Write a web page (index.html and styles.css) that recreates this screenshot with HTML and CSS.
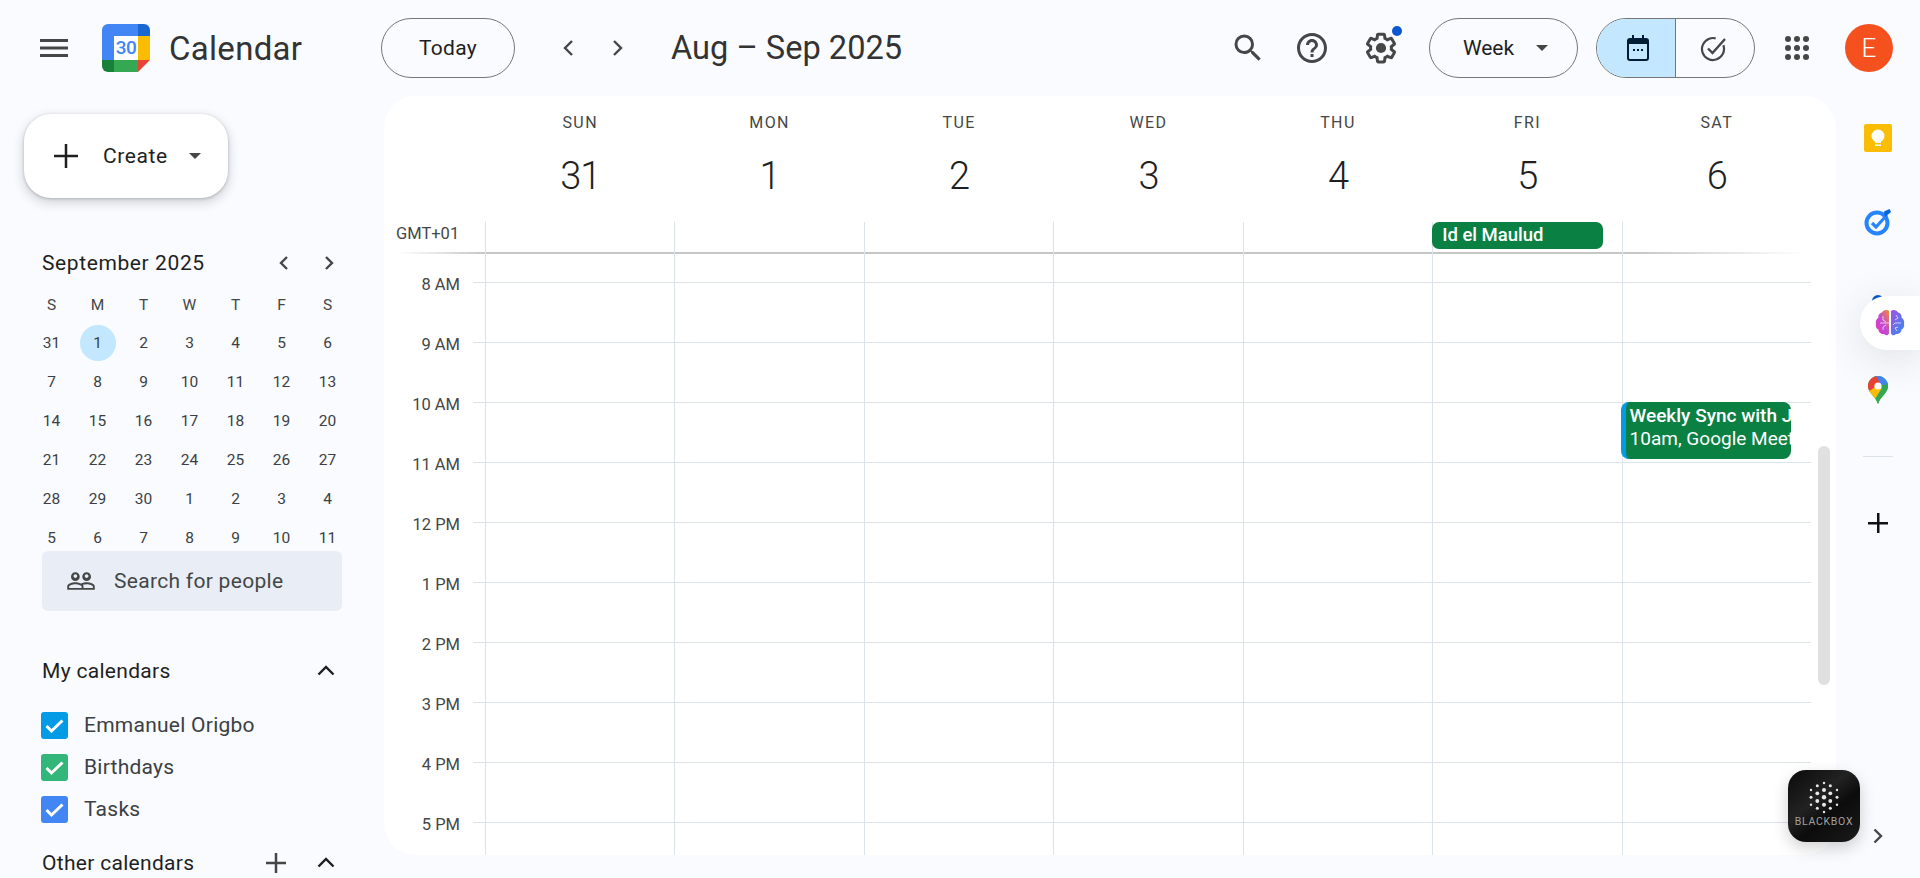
FILE: index.html
```html
<!DOCTYPE html>
<html lang="en">
<head>
    <meta charset="UTF-8">
    <meta name="viewport" content="width=device-width, initial-scale=1.0">
    <title>Calendar - Week of August 31, 2025</title>
    <link rel="stylesheet" href="styles.css">
</head>
<body>
    <header class="topbar">
        <div class="brand">
            <span class="icon-btn">
                <svg width="28" height="18" viewBox="0 0 28 18"><path d="M0 0h28v3H0zM0 7.5h28v3H0zM0 15h28v3H0z" fill="#444746"/></svg>
            </span>
            <span class="logo">
                <svg width="48" height="48" viewBox="0 0 48 48">
                    <path d="M6 0h30v12h-24v24H0V6a6 6 0 0 1 6-6z" fill="#4285f4"/>
                    <path d="M36 0h6a6 6 0 0 1 6 6v6H36z" fill="#1967d2"/>
                    <path d="M36 12h12v24H36z" fill="#fbbc04"/>
                    <path d="M12 36h24v12H12z" fill="#34a853"/>
                    <path d="M0 36h12v12H6a6 6 0 0 1-6-6z" fill="#188038"/>
                    <path d="M36 36h12L36 48z" fill="#ea4335"/>
                    <path d="M12 12h24v24H12z" fill="#fff"/>
                </svg>
                <span class="logo-num">30</span>
            </span>
            <span class="brand-name">Calendar</span>
        </div>
        <button class="pill today">Today</button>
        <span class="icon-btn nav-prev"><svg width="24" height="24" viewBox="0 0 24 24"><path d="M16 5l-7 7 7 7" class="chev"/></svg></span>
        <span class="icon-btn nav-next"><svg width="24" height="24" viewBox="0 0 24 24"><path d="M9 5l7 7-7 7" class="chev"/></svg></span>
        <h1 class="range">Aug – Sep 2025</h1>
        <div class="spacer"></div>
        <span class="icon-btn">
            <svg width="36" height="36" viewBox="0 0 24 24"><path fill="#444746" d="M15.5 14h-.79l-.28-.27A6.471 6.471 0 0 0 16 9.5 6.5 6.5 0 1 0 9.500 16c1.610 0 3.090-.59 4.230-1.570l.27.28v.79l5 4.990L20.490 19l-4.990-5zm-6 0C7.010 14 5 11.990 5 9.500S7.010 5 9.500 5 14 7.010 14 9.500 11.990 14 9.500 14z"/></svg>
        </span>
        <span class="icon-btn gap-help">
            <svg width="36" height="36" viewBox="0 0 24 24"><path fill="#444746" d="M11 18h2v-2h-2v2zm1-16C6.48 2 2 6.48 2 12s4.48 10 10 10 10-4.48 10-10S17.52 2 12 2zm0 18c-4.41 0-8-3.59-8-8s3.59-8 8-8 8 3.59 8 8-3.59 8-8 8zm0-14c-2.21 0-4 1.79-4 4h2c0-1.1.9-2 2-2s2 .9 2 2c0 2-3 1.75-3 5h2c0-2.25 3-2.5 3-5 0-2.21-1.79-4-4-4z"/></svg>
        </span>
        <span class="icon-btn gap-settings settings">
            <svg width="36" height="36" viewBox="0 0 24 24"><path fill="#444746" d="M13.85 22.25h-3.7c-.74 0-1.36-.54-1.45-1.27l-.27-1.89c-.27-.14-.53-.29-.79-.46l-1.8.72c-.7.26-1.47-.03-1.81-.65L2.2 15.53c-.35-.66-.2-1.44.36-1.88l1.53-1.19c-.01-.15-.02-.3-.02-.46 0-.15.01-.31.02-.46l-1.52-1.19c-.59-.45-.74-1.26-.37-1.88l1.85-3.19c.34-.62 1.11-.9 1.79-.63l1.81.73c.26-.17.52-.32.78-.46l.27-1.91c.09-.7.71-1.25 1.44-1.25h3.7c.74 0 1.36.54 1.45 1.27l.27 1.89c.27.14.53.29.79.46l1.8-.72c.71-.26 1.48.03 1.82.65l1.84 3.18c.36.66.2 1.44-.36 1.88l-1.52 1.19c.01.15.02.3.02.46s-.01.31-.02.46l1.52 1.19c.56.45.72 1.23.37 1.86l-1.86 3.22c-.34.62-1.11.9-1.8.63l-1.8-.72c-.26.17-.52.32-.78.46l-.27 1.91c-.1.68-.72 1.22-1.46 1.22zm-3.23-2h2.76l.37-2.55.53-.22c.44-.18.88-.44 1.34-.78l.45-.34 2.38.96 1.38-2.4-2.03-1.58.07-.56c.03-.26.06-.51.06-.78s-.03-.53-.06-.78l-.07-.56 2.03-1.58-1.39-2.4-2.39.96-.45-.35c-.42-.32-.87-.58-1.33-.77l-.52-.22-.37-2.55h-2.76l-.37 2.55-.53.21c-.44.19-.88.44-1.34.79l-.45.33-2.38-.95-1.39 2.39 2.03 1.58-.07.56a7 7 0 0 0-.06.79c0 .26.02.53.06.78l.07.56-2.03 1.58 1.38 2.4 2.39-.96.45.35c.43.33.86.58 1.33.77l.53.22.38 2.55z"/><circle cx="12" cy="12" r="3.4" fill="#444746"/></svg>
            <span class="notify-dot"></span>
        </span>
        <button class="pill week">Week <span class="caret"></span></button>
        <div class="toggle">
            <span class="toggle-item active">
                <svg width="24" height="26" viewBox="0 0 24 26"><path fill="#001d35" d="M6 0h2v3h8V0h2v3h2a3 3 0 0 1 3 3v17a3 3 0 0 1-3 3H4a3 3 0 0 1-3-3V6a3 3 0 0 1 3-3h2zM3 9v14a1 1 0 0 0 1 1h16a1 1 0 0 0 1-1V9zm4 5h2v2H7zm4 0h2v2h-2zm4 0h2v2h-2z"/></svg>
            </span>
            <span class="toggle-item tasks-view">
                <svg width="28" height="28" viewBox="0 0 28 28"><circle cx="13" cy="15" r="11" fill="none" stroke="#444746" stroke-width="2.2" stroke-dasharray="58 11" transform="rotate(-20 13 15)"/><path d="M8 14.5l4.5 4.500L25 5" fill="none" stroke="#444746" stroke-width="2.4"/></svg>
            </span>
        </div>
        <span class="icon-btn gap-apps">
            <svg width="24" height="24" viewBox="0 0 24 24" fill="#444746"><circle cx="3" cy="3" r="3"/><circle cx="12" cy="3" r="3"/><circle cx="21" cy="3" r="3"/><circle cx="3" cy="12" r="3"/><circle cx="12" cy="12" r="3"/><circle cx="21" cy="12" r="3"/><circle cx="3" cy="21" r="3"/><circle cx="12" cy="21" r="3"/><circle cx="21" cy="21" r="3"/></svg>
        </span>
        <span class="avatar">E</span>
    </header>

    <div class="main">
        <aside class="sidebar">
            <button class="create">
                <svg width="24" height="24" viewBox="0 0 24 24"><path d="M10.75 0h2.5v10.75H24v2.5H13.25V24h-2.5V13.25H0v-2.5h10.75z" fill="#1f1f1f"/></svg>
                <span class="create-label">Create</span>
                <span class="caret"></span>
            </button>

            <div class="mini-head">
                <span class="mini-title">September 2025</span>
                <svg width="24" height="24" viewBox="0 0 24 24"><path d="M15 6l-6 6 6 6" class="chev"/></svg>
                <svg width="24" height="24" viewBox="0 0 24 24"><path d="M9 6l6 6-6 6" class="chev"/></svg>
            </div>
            <div class="mini-grid">
                <span class="dow">S</span><span class="dow">M</span><span class="dow">T</span><span class="dow">W</span><span class="dow">T</span><span class="dow">F</span><span class="dow">S</span>
                <span>31</span><span><b class="selected">1</b></span><span>2</span><span>3</span><span>4</span><span>5</span><span>6</span>
                <span>7</span><span>8</span><span>9</span><span>10</span><span>11</span><span>12</span><span>13</span>
                <span>14</span><span>15</span><span>16</span><span>17</span><span>18</span><span>19</span><span>20</span>
                <span>21</span><span>22</span><span>23</span><span>24</span><span>25</span><span>26</span><span>27</span>
                <span>28</span><span>29</span><span>30</span><span>1</span><span>2</span><span>3</span><span>4</span>
                <span>5</span><span>6</span><span>7</span><span>8</span><span>9</span><span>10</span><span>11</span>
            </div>

            <div class="people-search">
                <svg width="30" height="30" viewBox="0 0 24 24"><path fill="#444746" d="M16.5 13c-1.2 0-3.07.34-4.5 1-1.43-.67-3.3-1-4.5-1C5.33 13 1 14.08 1 16.25V19h22v-2.75c0-2.17-4.33-3.25-6.5-3.25zm-4 4.5h-10v-1.25c0-.54 2.56-1.75 5-1.75s5 1.21 5 1.75v1.25zm9 0H14v-1.25c0-.46-.2-.86-.52-1.22.88-.3 1.96-.53 3.02-.53 2.44 0 5 1.21 5 1.75v1.25zM7.5 12c1.93 0 3.5-1.57 3.5-3.5S9.43 5 7.5 5 4 6.57 4 8.5 5.57 12 7.5 12zm0-5.5c.83 0 1.5.67 1.5 1.5s-.67 1.5-1.5 1.5S6 8.83 6 8s.67-1.5 1.5-1.5zm9 5.5c1.93 0 3.5-1.57 3.5-3.5S18.43 5 16.5 5 13 6.57 13 8.5s1.57 3.5 3.5 3.5zm0-5.5c.83 0 1.5.67 1.5 1.5s-.67 1.5-1.5 1.5S15 8.83 15 8s.67-1.5 1.5-1.5z"/></svg>
                <span>Search for people</span>
            </div>

            <div class="section-head my-head">
                <span class="section-title">My calendars</span>
                <svg width="24" height="24" viewBox="0 0 24 24"><path d="M4.5 15.5l7.5-7.5 7.5 7.5" class="chev dark"/></svg>
            </div>
            <ul class="cal-list">
                <li><span class="check blue"><svg width="21" height="21" viewBox="0 0 21 21"><path d="M2.500 11l5 5L18.500 5.500" class="tick"/></svg></span>Emmanuel Origbo</li>
                <li><span class="check green"><svg width="21" height="21" viewBox="0 0 21 21"><path d="M2.500 11l5 5L18.500 5.500" class="tick"/></svg></span>Birthdays</li>
                <li><span class="check indigo"><svg width="21" height="21" viewBox="0 0 21 21"><path d="M2.500 11l5 5L18.500 5.500" class="tick"/></svg></span>Tasks</li>
            </ul>
            <div class="section-head other-head">
                <span class="section-title">Other calendars</span>
                <svg width="24" height="24" viewBox="0 0 24 24"><path d="M2 10.75h8.75V2h2.5v8.75H22v2.5h-8.75V22h-2.5v-8.75H2z" fill="#444746"/></svg>
                <svg class="other-chev" width="24" height="24" viewBox="0 0 24 24"><path d="M4.5 15.5l7.5-7.5 7.5 7.5" class="chev dark"/></svg>
            </div>
        </aside>

        <main class="card">
            <div class="week-head">
                <div class="day-head"><span class="day-name">SUN</span><span class="day-num">31</span></div>
                <div class="day-head"><span class="day-name">MON</span><span class="day-num">1</span></div>
                <div class="day-head"><span class="day-name">TUE</span><span class="day-num">2</span></div>
                <div class="day-head"><span class="day-name">WED</span><span class="day-num">3</span></div>
                <div class="day-head"><span class="day-name">THU</span><span class="day-num">4</span></div>
                <div class="day-head"><span class="day-name">FRI</span><span class="day-num">5</span></div>
                <div class="day-head"><span class="day-name">SAT</span><span class="day-num">6</span></div>
            </div>
            <div class="allday week-row">
                <div class="tz">GMT+01</div>
                <div class="cell"></div><div class="cell"></div><div class="cell"></div><div class="cell"></div><div class="cell"></div>
                <div class="cell"><div class="allday-event">Id el Maulud</div></div>
                <div class="cell"></div>
            </div>
            <div class="hours">
                <div class="week-row first"><div class="time"></div><div class="cell"></div><div class="cell"></div><div class="cell"></div><div class="cell"></div><div class="cell"></div><div class="cell"></div><div class="cell"></div></div>
                <div class="week-row hour"><div class="time">8 AM</div><div class="cell"></div><div class="cell"></div><div class="cell"></div><div class="cell"></div><div class="cell"></div><div class="cell"></div><div class="cell"></div></div>
                <div class="week-row hour"><div class="time">9 AM</div><div class="cell"></div><div class="cell"></div><div class="cell"></div><div class="cell"></div><div class="cell"></div><div class="cell"></div><div class="cell"></div></div>
                <div class="week-row hour"><div class="time">10 AM</div><div class="cell"></div><div class="cell"></div><div class="cell"></div><div class="cell"></div><div class="cell"></div><div class="cell"></div>
                    <div class="cell">
                        <div class="event">
                            <div class="event-title">Weekly Sync with J</div>
                            <div class="event-meta">10am, Google Meet</div>
                        </div>
                    </div>
                </div>
                <div class="week-row hour"><div class="time">11 AM</div><div class="cell"></div><div class="cell"></div><div class="cell"></div><div class="cell"></div><div class="cell"></div><div class="cell"></div><div class="cell"></div></div>
                <div class="week-row hour"><div class="time">12 PM</div><div class="cell"></div><div class="cell"></div><div class="cell"></div><div class="cell"></div><div class="cell"></div><div class="cell"></div><div class="cell"></div></div>
                <div class="week-row hour"><div class="time">1 PM</div><div class="cell"></div><div class="cell"></div><div class="cell"></div><div class="cell"></div><div class="cell"></div><div class="cell"></div><div class="cell"></div></div>
                <div class="week-row hour"><div class="time">2 PM</div><div class="cell"></div><div class="cell"></div><div class="cell"></div><div class="cell"></div><div class="cell"></div><div class="cell"></div><div class="cell"></div></div>
                <div class="week-row hour"><div class="time">3 PM</div><div class="cell"></div><div class="cell"></div><div class="cell"></div><div class="cell"></div><div class="cell"></div><div class="cell"></div><div class="cell"></div></div>
                <div class="week-row hour"><div class="time">4 PM</div><div class="cell"></div><div class="cell"></div><div class="cell"></div><div class="cell"></div><div class="cell"></div><div class="cell"></div><div class="cell"></div></div>
                <div class="week-row hour"><div class="time">5 PM</div><div class="cell"></div><div class="cell"></div><div class="cell"></div><div class="cell"></div><div class="cell"></div><div class="cell"></div><div class="cell"></div></div>
            </div>
            <div class="scroll-thumb"></div>
        </main>

        <nav class="addons">
            <span class="addon">
                <svg width="28" height="28" viewBox="0 0 28 28"><rect width="28" height="28" rx="2" fill="#fbbc04"/><circle cx="14" cy="12" r="6.5" fill="#fff"/><path d="M11 16h6v3h-6z" fill="#fff"/><path d="M11 20.5h6v1.5h-6z" fill="#fff"/></svg>
            </span>
            <span class="addon">
                <svg width="28" height="28" viewBox="0 0 28 28"><circle cx="13" cy="15" r="10.5" fill="none" stroke="#2684fc" stroke-width="4"/><path d="M8 15l4 4L23 7" fill="none" stroke="#2684fc" stroke-width="3.2"/><path d="M20 3.500l5.500-2.500 1.500 3-6 5z" fill="#0066da"/></svg>
            </span>
            <span class="addon">
                <svg width="28" height="28" viewBox="0 0 28 28"><circle cx="14" cy="9" r="6" fill="#0b57d0"/><path d="M2 26c0-6 6-9 12-9s12 3 12 9z" fill="#1a73e8"/></svg>
            </span>
            <span class="addon">
                <svg width="20" height="28" viewBox="0 0 20 28">
                    <defs><clipPath id="pin"><path d="M10 0C4.5 0 0 4.5 0 10c0 7 7.5 10 10 18 2.500-8 10-11 10-18C20 4.500 15.500 0 10 0z"/></clipPath></defs>
                    <g clip-path="url(#pin)">
                        <path d="M0 0h20v28H0z" fill="#34a853"/>
                        <path d="M4 0h16v9h-7z" fill="#4285f4"/>
                        <path d="M0 0h8l4 7-9 8H0z" fill="#ea4335"/>
                        <path d="M0 15l3-1 9-7 2 7-10 14H0z" fill="#fbbc04"/>
                        <path d="M20 6l-8 9-8 13h16z" fill="#34a853"/>
                    </g>
                    <circle cx="10" cy="10" r="3.6" fill="#fff"/>
                </svg>
            </span>
            <span class="addon-rule"></span>
            <span class="addon">
                <svg width="24" height="24" viewBox="0 0 24 24"><path d="M11 2h2.500v9H22v2.500h-8.500V22H11v-8.500H2V11h9z" fill="#111"/></svg>
            </span>
            <span class="addons-end">
                <svg width="24" height="24" viewBox="0 0 24 24"><path d="M8.500 5.500l6.500 6.500-6.500 6.500" class="chev"/></svg>
            </span>
        </nav>
    </div>

    <!-- extension widgets on top of the page -->
    <div class="brain-tab">
        <svg width="30" height="30" viewBox="0 0 30 30">
            <defs>
                <linearGradient id="lobeL" x1="0" y1="1" x2="1" y2="0"><stop offset="0" stop-color="#ee2fb4"/><stop offset=".5" stop-color="#c04bd8"/><stop offset="1" stop-color="#f58a2e"/></linearGradient>
                <linearGradient id="lobeR" x1="0" y1="0" x2="1" y2="1"><stop offset="0" stop-color="#a44fe6"/><stop offset="1" stop-color="#2f8ff0"/></linearGradient>
            </defs>
            <path d="M14 3c-2-2-6-1-7 1.500C4 5 3 8 3.500 9.500 1 11 .3 14.500 1 16c-.7 2 .5 5 2.500 5.500 0 3 3 5 5.500 4.500 2 2 4 1.500 5-.5z" fill="url(#lobeL)"/>
            <path d="M16 3c2-2 6-1 7 1.500 3 .5 4 3.500 3.500 5 2.500 1.500 3.200 5 2.500 6.500.7 2-.5 5-2.500 5.500 0 3-3 5-5.500 4.500-2 2-4 1.500-5-.5z" fill="url(#lobeR)"/>
            <path d="M5 15h9M8 8v4l3 2M8 22v-3l3-2M21 7l2 3-3 2M26 15h-6l-2 2M22 23l-2-3 3-1" fill="none" stroke="#fff" stroke-width=".8" opacity=".85"/>
        </svg>
    </div>
    <div class="blackbox">
        <svg width="72" height="46" viewBox="0 0 72 46" fill="#e8e8e8">
            <circle cx="36" cy="13" r="1.200"/><circle cx="29.300" cy="15.700" r="1.500"/><circle cx="42.300" cy="15.700" r="1.500"/>
            <circle cx="23" cy="20" r="1.200"/><circle cx="36" cy="20" r="2"/><circle cx="49" cy="20" r="1.200"/>
            <circle cx="29.300" cy="23.300" r="1.900"/><circle cx="42.300" cy="23.300" r="1.900"/>
            <circle cx="23" cy="27.300" r="1.500"/><circle cx="36" cy="27.300" r="2.200"/><circle cx="49" cy="27.300" r="1.500"/>
            <circle cx="29.300" cy="31" r="1.900"/><circle cx="42.300" cy="31" r="1.900"/>
            <circle cx="23" cy="34.700" r="1.200"/><circle cx="36" cy="34.700" r="2"/><circle cx="49" cy="34.700" r="1.200"/>
            <circle cx="29.300" cy="38.300" r="1.500"/><circle cx="42.300" cy="38.300" r="1.500"/><circle cx="36" cy="42" r="1.200"/>
        </svg>
        <span class="blackbox-name">BLACKBOX</span>
    </div>
</body>
</html>
```

FILE: styles.css
```css
* {
    box-sizing: border-box;
}

html, body {
    height: 100%;
}

body {
    margin: 0;
    overflow: hidden;
    background-color: #f9fbff;
    color: #1f1f1f;
    font-family: Roboto, 'Liberation Sans', sans-serif;
    display: flex;
    flex-direction: column;
}

button {
    font-family: inherit;
    cursor: pointer;
}

svg {
    display: block;
    flex-shrink: 0;
}

.chev {
    fill: none;
    stroke: #444746;
    stroke-width: 2.4;
}

.chev.dark {
    stroke: #1f1f1f;
}

.caret {
    display: inline-block;
    width: 0;
    height: 0;
    border-left: 6px solid transparent;
    border-right: 6px solid transparent;
    border-top: 6px solid #444746;
}

/* top bar */
.topbar {
    height: 96px;
    flex-shrink: 0;
    display: flex;
    align-items: center;
    padding: 0 27px 0 30px;
}

.icon-btn {
    width: 48px;
    height: 48px;
    display: flex;
    align-items: center;
    justify-content: center;
    flex-shrink: 0;
    position: relative;
}

.brand {
    width: 351px;
    display: flex;
    align-items: center;
}

.logo {
    width: 48px;
    height: 48px;
    margin-left: 24px;
    position: relative;
    display: block;
}

.logo-num {
    position: absolute;
    left: 12px;
    top: 12px;
    width: 24px;
    height: 24px;
    line-height: 24px;
    text-align: center;
    font-size: 19px;
    letter-spacing: -0.5px;
    color: #4285f4;
    font-weight: 500;
}

.brand-name {
    margin-left: 19px;
    font-size: 33px;
    color: #333;
    letter-spacing: 0.3px;
}

.pill {
    height: 60px;
    border: 1px solid #747775;
    border-radius: 30px;
    background: transparent;
    color: #1f1f1f;
    font-size: 21px;
    display: flex;
    align-items: center;
    justify-content: center;
    flex-shrink: 0;
}

.today {
    width: 134px;
    letter-spacing: 0.3px;
}

.week {
    width: 149px;
    margin-left: 24px;
    padding-right: 2px;
    gap: 22px;
}

.nav-prev {
    margin-left: 29px;
}

.nav-next {
    margin-left: 1px;
}

.range {
    margin: 0 0 0 30px;
    font-size: 32.6px;
    font-weight: 400;
    color: #333;
    white-space: nowrap;
}

.spacer {
    flex: 1;
}

.gap-help {
    margin-left: 16px;
}

.gap-settings {
    margin-left: 21px;
}

.gap-apps {
    margin-left: 18px;
}

.notify-dot {
    position: absolute;
    right: 3px;
    top: 2px;
    width: 10px;
    height: 10px;
    border-radius: 50%;
    background: #0b57d0;
}

.toggle {
    width: 159px;
    height: 60px;
    margin-left: 18px;
    border: 1px solid #747775;
    border-radius: 30px;
    display: flex;
    overflow: hidden;
    flex-shrink: 0;
}

.toggle-item {
    flex: 1;
    display: flex;
    align-items: center;
    justify-content: center;
}

.toggle-item.active {
    flex: none;
    width: 79px;
    padding-left: 3px;
    background: #c2e7ff;
    border-right: 1px solid #747775;
}

.tasks-view {
    padding-right: 2px;
}

.avatar {
    width: 48px;
    height: 48px;
    margin-left: 24px;
    border-radius: 50%;
    background: #f4511e;
    color: #fff;
    font-size: 26px;
    font-weight: 300;
    display: flex;
    align-items: center;
    justify-content: center;
    flex-shrink: 0;
}

/* layout under the bar */
.main {
    flex: 1;
    min-height: 0;
    display: flex;
}

.sidebar {
    width: 384px;
    flex-shrink: 0;
    overflow: hidden;
}

.create {
    width: 204px;
    height: 84px;
    margin: 18px 0 0 24px;
    padding: 0 0 0 30px;
    border: none;
    border-radius: 27px;
    background: #fff;
    box-shadow: 0 1px 3px rgba(60, 64, 67, 0.3), 0 4px 8px 3px rgba(60, 64, 67, 0.15);
    display: flex;
    align-items: center;
}

.create-label {
    margin-left: 25px;
    font-size: 21px;
    color: #1f1f1f;
    letter-spacing: 0.6px;
}

.create .caret {
    margin-left: 21px;
}

/* mini month */
.mini-head {
    height: 30px;
    margin-top: 50px;
    padding: 0 43px 0 42px;
    display: flex;
    align-items: center;
    gap: 21px;
}

.mini-title {
    flex: 1;
    font-size: 21px;
    color: #1f1f1f;
    letter-spacing: 0.6px;
}

.mini-grid {
    margin: 9px 0 0 28.5px;
    display: grid;
    grid-template-columns: repeat(7, 46px);
    grid-template-rows: 36px repeat(6, 39px);
    font-size: 15.5px;
    color: #3c4043;
}

.mini-grid span {
    display: flex;
    align-items: center;
    justify-content: center;
}

.dow {
    color: #444746;
}

.selected {
    width: 36px;
    height: 36px;
    border-radius: 50%;
    background: #c2e7ff;
    font-weight: 400;
    display: flex;
    align-items: center;
    justify-content: center;
}

.people-search {
    width: 300px;
    height: 60px;
    margin: -6px 0 0 42px;
    padding-left: 24px;
    border-radius: 6px;
    background: #e9eef6;
    color: #444746;
    font-size: 21px;
    letter-spacing: 0.3px;
    display: flex;
    align-items: center;
    gap: 18px;
    position: relative;
}

/* calendar lists */
.section-head {
    height: 30px;
    padding: 0 46px 0 42px;
    display: flex;
    align-items: center;
}

.my-head {
    margin-top: 45px;
}

.other-head {
    margin-top: 18px;
}

.other-chev {
    margin-left: 26px;
}

.section-title {
    flex: 1;
    font-size: 21px;
    color: #1f1f1f;
    letter-spacing: 0.3px;
}

.cal-list {
    list-style: none;
    margin: 18px 0 0;
    padding: 0 0 0 41px;
}

.cal-list li {
    height: 42px;
    display: flex;
    align-items: center;
    font-size: 21px;
    color: #3c4043;
    letter-spacing: 0.25px;
}

.check {
    width: 27px;
    height: 27px;
    margin-right: 16px;
    border-radius: 3px;
    display: flex;
    align-items: center;
    justify-content: center;
}

.check.blue {
    background: #039be5;
}

.check.green {
    background: #33b679;
}

.check.indigo {
    background: #4285f4;
}

.tick {
    fill: none;
    stroke: #fff;
    stroke-width: 3;
}

/* week view */
.card {
    flex: 1;
    min-width: 0;
    margin-bottom: 23px;
    padding-right: 25px;
    background: #fff;
    border-radius: 32px;
    overflow: hidden;
    display: flex;
    flex-direction: column;
    position: relative;
}

.week-head {
    height: 126px;
    padding-left: 101px;
    display: grid;
    grid-template-columns: repeat(7, 1fr);
    flex-shrink: 0;
}

.day-head {
    display: flex;
    flex-direction: column;
    align-items: center;
    padding: 17px 0 0 1px;
}

.day-name {
    font-size: 16px;
    line-height: 20px;
    letter-spacing: 1.4px;
    color: #444746;
}

.day-num {
    margin-top: 19px;
    font-size: 38px;
    font-weight: 300;
    letter-spacing: -1px;
    line-height: 48px;
    color: #1f1f1f;
}

.week-row {
    display: grid;
    grid-template-columns: 101px repeat(7, 1fr);
}

.cell {
    border-left: 1px solid #dde3ea;
    position: relative;
}

.allday {
    height: 30px;
    flex-shrink: 0;
    position: relative;
}

/* divider under the all-day row, fades out at both ends */
.allday::after {
    content: "";
    position: absolute;
    left: 12px;
    right: 0;
    bottom: -2px;
    height: 2px;
    background: linear-gradient(to right, rgba(150, 153, 156, 0) 0, #c4c7c5 90px, #c4c7c5 1240px, rgba(150, 153, 156, 0) 1410px);
}

.tz {
    padding: 1px 0 0 12px;
    font-size: 16.5px;
    line-height: 22px;
    color: #444746;
}

.allday-event {
    width: 171px;
    height: 27px;
    margin-left: -1px;
    padding-left: 10px;
    border-radius: 7px;
    background: #0b8043;
    color: #fff;
    font-size: 18.5px;
    font-weight: 500;
    line-height: 27px;
    position: relative;
    z-index: 1;
}

.hours {
    flex: 1;
    min-height: 0;
    overflow: hidden;
}

.first {
    height: 30px;
}

.hour {
    height: 60px;
    background-image: linear-gradient(#dde3ea, #dde3ea);
    background-size: calc(100% - 89px) 1px;
    background-position: right top;
    background-repeat: no-repeat;
}

.time {
    padding-right: 25px;
    margin-top: -7px;
    text-align: right;
    font-size: 16.5px;
    line-height: 20px;
    color: #444746;
}

.event {
    position: absolute;
    left: -2px;
    top: 0;
    width: 170px;
    height: 57px;
    padding: 2px 0 0 4px;
    border-left: 5px solid #039be5;
    border-radius: 8px;
    background: #0b8043;
    color: #fff;
    font-size: 19px;
    line-height: 23px;
    white-space: nowrap;
    overflow: hidden;
    z-index: 1;
}

.event-title {
    font-weight: 500;
}

.scroll-thumb {
    position: absolute;
    left: 1434px;
    top: 350px;
    width: 12px;
    height: 239px;
    border-radius: 6px;
    background: #e0e0e0;
}

/* add-on strip */
.addons {
    width: 84px;
    flex-shrink: 0;
    display: flex;
    flex-direction: column;
    align-items: center;
}

.addon {
    height: 84px;
    display: flex;
    align-items: center;
    justify-content: center;
    flex-shrink: 0;
}

.addon-rule {
    width: 30px;
    height: 1px;
    margin: 24px 0 24px;
    background: #dde3ea;
}

.addons-end {
    margin-top: auto;
    margin-bottom: 30px;
}

/* floating extension widgets */
.brain-tab {
    position: absolute;
    left: 1860px;
    top: 296px;
    width: 60px;
    height: 54px;
    padding-left: 15px;
    border-radius: 27px 0 0 27px;
    background: #fff;
    box-shadow: 0 8px 40px rgba(60, 64, 67, 0.14);
    display: flex;
    align-items: center;
}

.blackbox {
    position: absolute;
    left: 1788px;
    top: 770px;
    width: 72px;
    height: 72px;
    border-radius: 18px;
    background: linear-gradient(140deg, #0b0b0b 0, #222 40%, #0c0c0c 60%, #1a1a1a 100%);
    box-shadow: 0 6px 16px rgba(0, 0, 0, 0.18);
    overflow: hidden;
}

.blackbox-name {
    display: block;
    text-align: center;
    font-size: 10.5px;
    line-height: 12px;
    letter-spacing: 0.7px;
    color: #a0a0a0;
}
```
